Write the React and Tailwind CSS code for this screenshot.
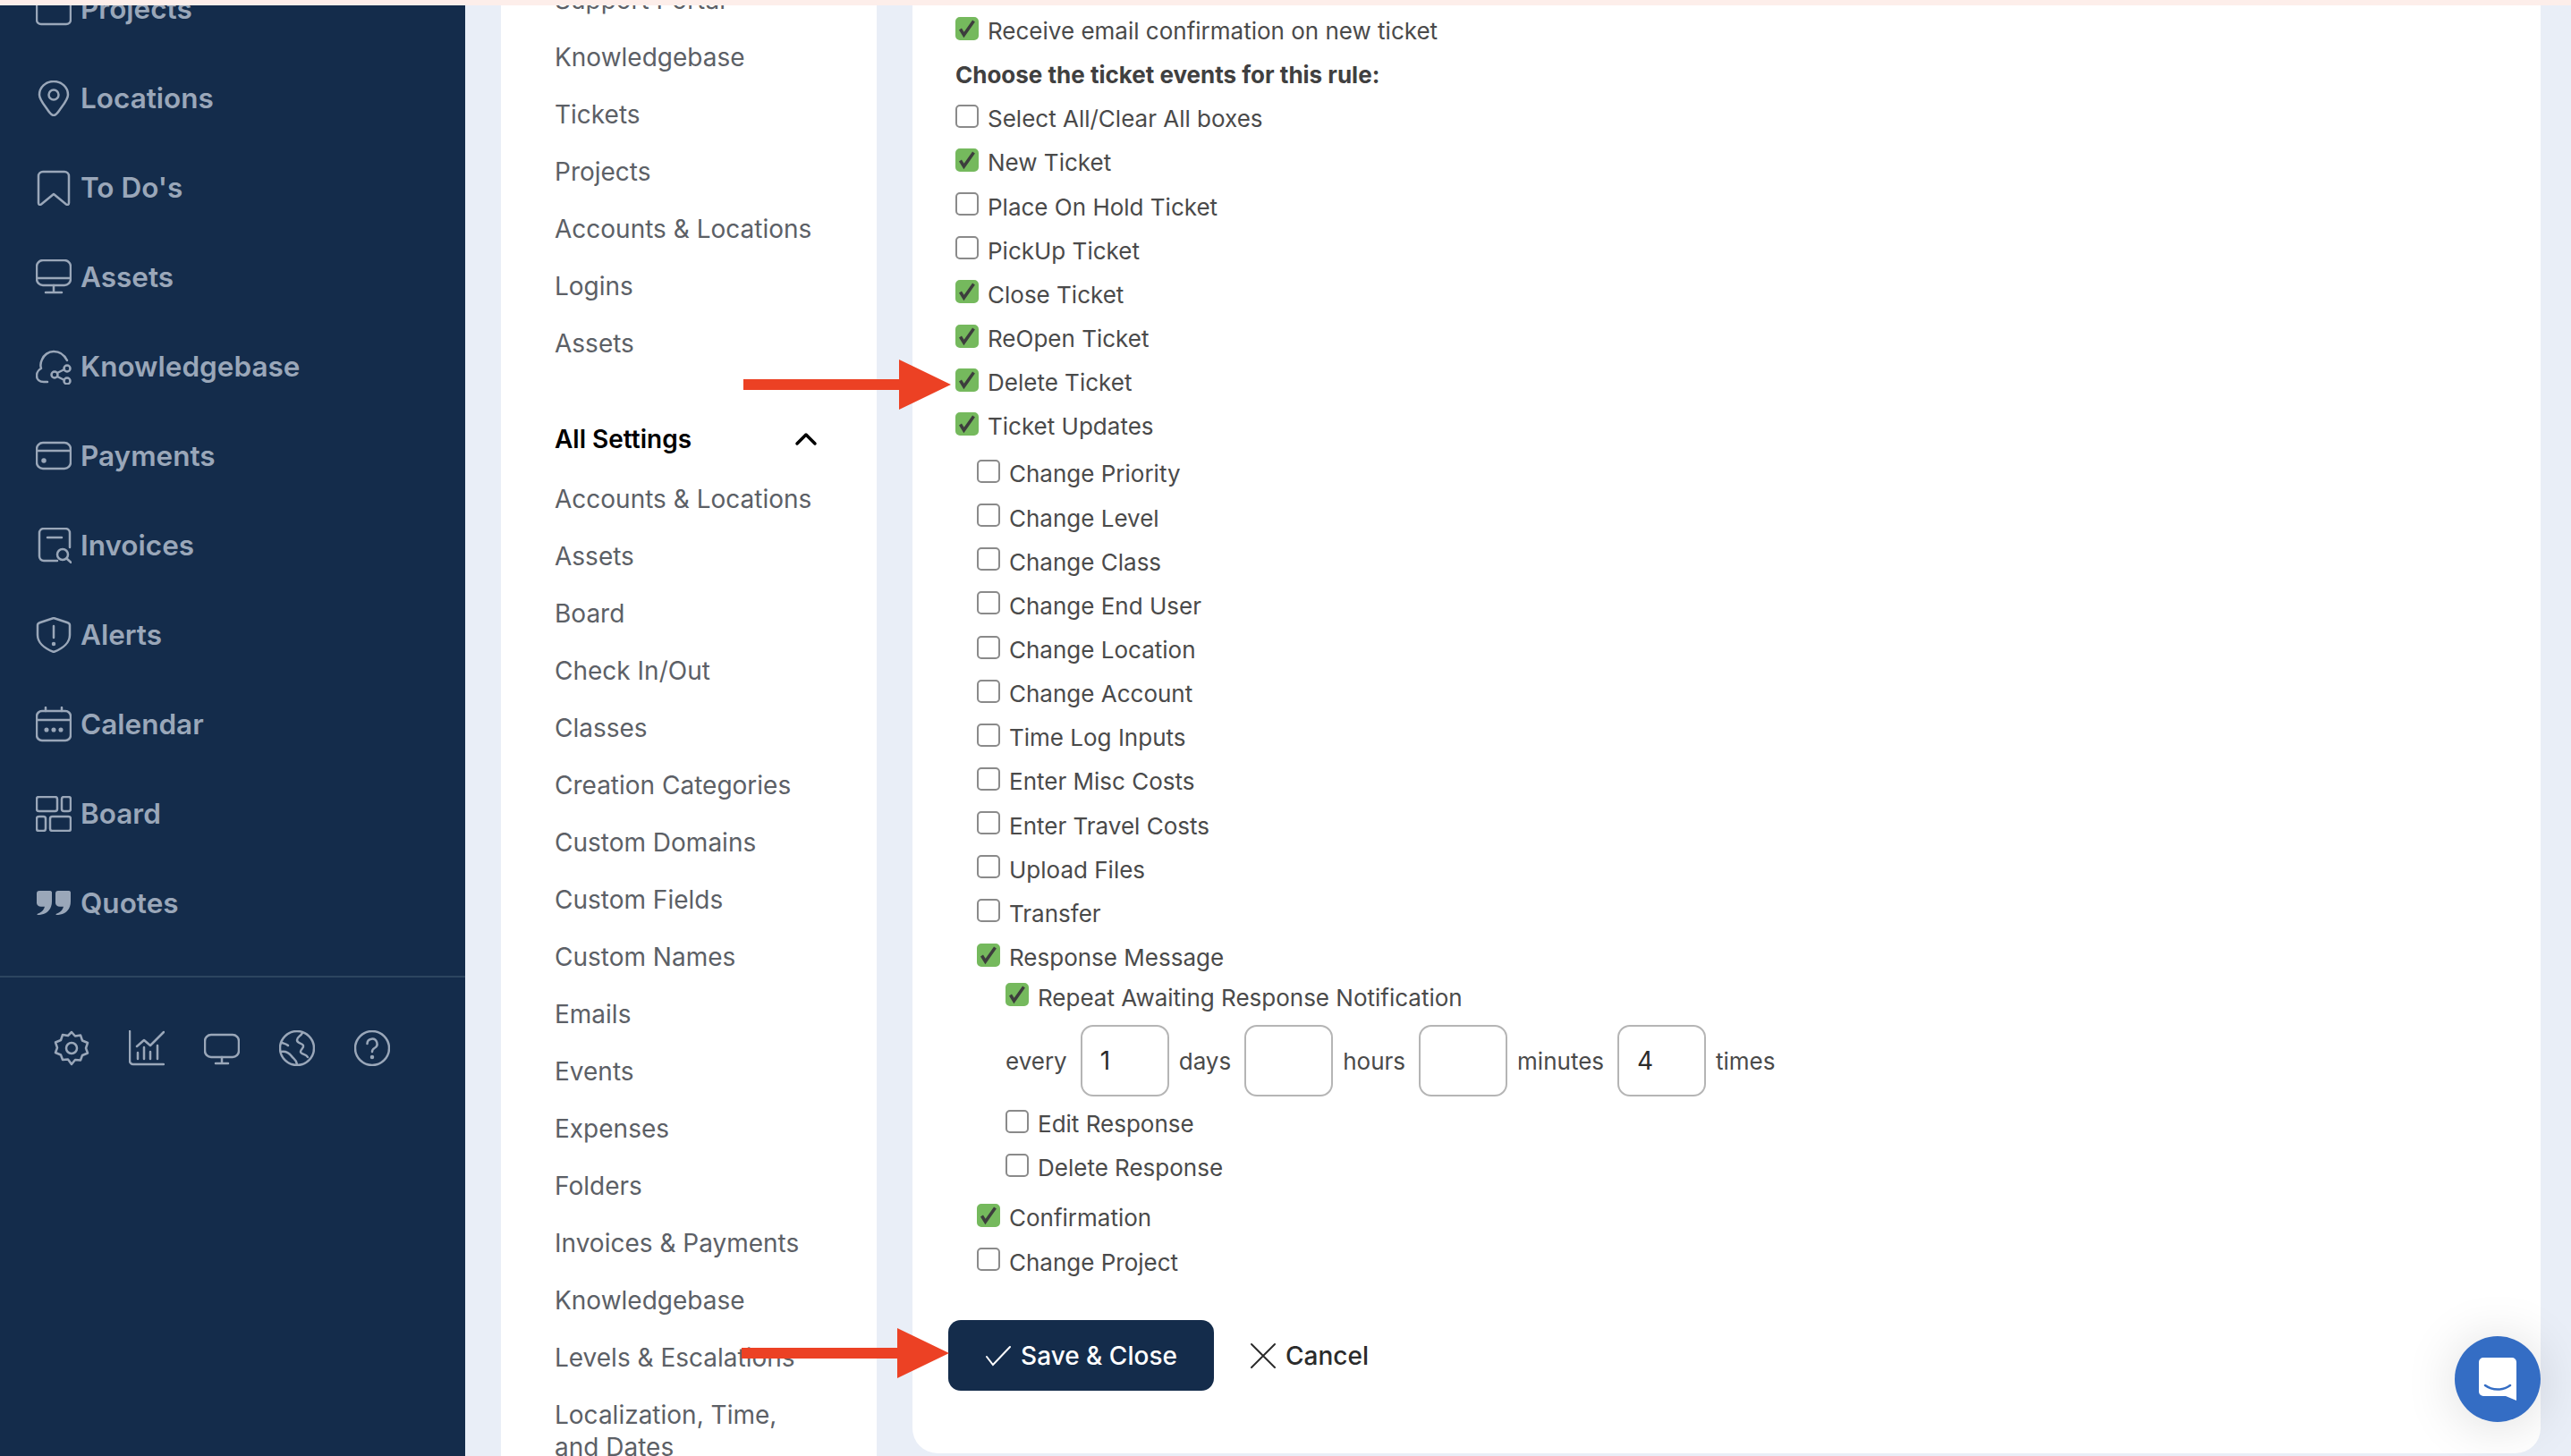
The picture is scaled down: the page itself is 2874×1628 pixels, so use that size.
const I = ({ children, w = 40, h = 40 }) => (
  <svg width={w} height={h} viewBox="0 0 40 40" fill="none" stroke="#9aa7b9" strokeWidth="2.5" strokeLinecap="round" strokeLinejoin="round" className="shrink-0">
    {children}
  </svg>
);

const icons = {
  Projects: <rect x="1" y="1" width="38" height="36" rx="5" />,
  Locations: (
    <>
      <path d="M20 39c-2 0-4-2-7-6.500C9 27 4 21 4 16 4 7.500 11 1 20 1s16 6.500 16 15c0 5-5 11-9 16.500C24 37 22 39 20 39z" />
      <circle cx="20" cy="16" r="5.500" />
    </>
  ),
  "To Do's": <path d="M3 7a5 5 0 0 1 5-5h24a5 5 0 0 1 5 5v30c0 2-1.500 2.500-3 1.500L20 27 6 38.500C4.500 39.500 3 39 3 37z" />,
  Assets: (
    <>
      <rect x="1" y="1" width="38" height="28" rx="7" />
      <path d="M1 21h38M20 29v7M11 37h18" />
    </>
  ),
  Knowledgebase: (
    <>
      <path d="M13 37H9c-5 0-8-3-8-7 0-4 3-7 5-8-1-3-1-6 1-10 2-5 7-9 13-9 7 0 12 4 15 10" />
      <circle cx="35" cy="22" r="3.500" />
      <circle cx="35" cy="36" r="3.500" />
      <circle cx="21" cy="29" r="3.500" />
      <path d="M24 27l8-4M24 31l8 4" />
    </>
  ),
  Payments: (
    <>
      <rect x="1" y="5" width="38" height="29" rx="7" />
      <path d="M1 14h38" />
      <circle cx="9" cy="25" r="1.500" fill="#9aa7b9" />
    </>
  ),
  Invoices: (
    <>
      <path d="M24 37H9a5 5 0 0 1-5-5V6a5 5 0 0 1 5-5h24a5 5 0 0 1 5 5v16" />
      <path d="M13 11h16" />
      <circle cx="30" cy="30" r="6" />
      <path d="M34.500 34.500l5 4.500" />
    </>
  ),
  Alerts: (
    <>
      <path d="M20 1l15 5c2 .7 3 1.500 3 3v11c0 8-7 15-18 19C9 35 2 28 2 20V9c0-1.500 1-2.300 3-3z" />
      <path d="M20 10v13" />
      <circle cx="20" cy="30" r="1" fill="#9aa7b9" />
    </>
  ),
  Calendar: (
    <>
      <rect x="1" y="5" width="38" height="33" rx="6" />
      <path d="M1 15h38M11 1v4M29 1v4" />
      <circle cx="12" cy="26" r="1.300" fill="#9aa7b9" />
      <circle cx="20" cy="26" r="1.300" fill="#9aa7b9" />
      <circle cx="28" cy="26" r="1.300" fill="#9aa7b9" />
    </>
  ),
  Board: (
    <>
      <rect x="1" y="1" width="23" height="16" rx="2.500" />
      <rect x="29" y="1" width="10" height="16" rx="2.500" />
      <rect x="1" y="23" width="10" height="16" rx="2.500" />
      <rect x="16" y="23" width="23" height="16" rx="2.500" />
    </>
  ),
  Quotes: (
    <g fill="#9aa7b9" stroke="none">
      <path d="M1 9c0-2 1-3 3-3h12c1.500 0 2 1 2 2v10c0 9-6 15-16 15 -.5 0-.7-1 0-1.300 4-1 7-4 8-8H6c-3 0-5-2-5-4z" />
      <path d="M22 9c0-2 1-3 3-3h12c1.500 0 2 1 2 2v10c0 9-6 15-16 15 -.5 0-.7-1 0-1.300 4-1 7-4 8-8H27c-3 0-5-2-5-4z" />
    </g>
  ),
};

const bottomIcons = [
  <>
    <path d="M20 2l4 4.500 6-1 2 6 6 2.500-2 6 2 5.500-6 2.500-2 5.500-6-.5L20 38l-4-5.500-6 .5-2-5.500-6-2.500 2-5.500-2-6 6-2.500 2-6 6 1z" />
    <circle cx="20" cy="20" r="6" />
  </>,
  <>
    <path d="M1 1v33a4 4 0 0 0 4 4h34" />
    <path d="M9 18l8-7 7 6 15-15" />
    <path d="M10 32v-7M17 32V19M24 32v-8M32 32V17" />
  </>,
  <>
    <rect x="1" y="5" width="38" height="25" rx="7" />
    <path d="M20 30v6M13 37h14" />
  </>,
  <>
    <circle cx="20" cy="20" r="19" />
    <path d="M2 24c6-1 9 1 12 5 2 3 5 3 6 9M26 3c-2 4-6 4-6 8 0 4 6 3 7 6s-3 4-3 7 6 2 8 6M3 14c3 1 5 1 7 3" />
  </>,
  <>
    <circle cx="20" cy="20" r="19" />
    <path d="M14.500 15a5.500 5.500 0 1 1 8 5c-1.700 1-2.500 2-2.500 4" />
    <circle cx="20" cy="30" r="1" fill="#9aa7b9" />
  </>,
];

const sideItems = ["Projects", "Locations", "To Do's", "Assets", "Knowledgebase", "Payments", "Invoices", "Alerts", "Calendar", "Board", "Quotes"];
const topLinks = ["Support Portal", "Knowledgebase", "Tickets", "Projects", "Accounts & Locations", "Logins", "Assets"];
const settingsLinks = ["Accounts & Locations", "Assets", "Board", "Check In/Out", "Classes", "Creation Categories", "Custom Domains", "Custom Fields", "Custom Names", "Emails", "Events", "Expenses", "Folders", "Invoices & Payments", "Knowledgebase", "Levels & Escalations"];

const Check = ({ label, on, h = "h-[49.150px]" }) => (
  <label className={`flex items-center gap-[10px] ${h}`}>
    <span className={`mb-[6px] flex h-[26px] w-[26px] shrink-0 items-center justify-center rounded-[5px] border-2 ${on ? "border-[#75b95d] bg-[#75b95d]" : "border-[#8a8a8a] bg-white"}`}>
      {on && (
        <svg width="22" height="22" viewBox="0 0 22 22" fill="none" stroke="#3d3d3d" strokeWidth="3.500" strokeLinejoin="miter">
          <path d="M3.500 11.500l4 6.500L18.500 2.500" />
        </svg>
      )}
    </span>
    <span>{label}</span>
  </label>
);

const Box = ({ v }) => (
  <span className="ml-[15px] mr-[11px] flex h-[80px] w-[99px] shrink-0 items-center rounded-[14px] border-2 border-[#b5b5b5] bg-white pl-[20px] text-[28px] text-[#2b2b2b]">{v}</span>
);

export default function App() {
  return (
    <div className="relative flex h-[1628px] w-[2874px] flex-col overflow-hidden bg-[#e9eef7] font-['Inter',sans-serif]">
      <div className="h-[6px] shrink-0 bg-[#fdeeea]" />
      <div className="flex min-h-0 flex-1 overflow-hidden">
        <aside className="flex w-[520px] shrink-0 flex-col bg-[#142c4b]">
          <div className="-mt-[46px] border-b-2 border-[#2c4560] pb-[31px] pl-[40px]">
            {sideItems.map((n) => (
              <div key={n} className="flex h-[100px] items-center gap-[10px] text-[31.500px] font-semibold text-[#9aa7b9]">
                <I>{icons[n]}</I>
                <span>{n}</span>
              </div>
            ))}
          </div>
          <div className="flex gap-[44px] pl-[60px] pt-[59px]">
            {bottomIcons.map((c, i) => (
              <I key={i}>{c}</I>
            ))}
          </div>
        </aside>

        <nav className="ml-[40px] flex w-[420px] shrink-0 flex-col bg-white pl-[60px] text-[28px] text-[#5c6066]">
          <div className="-mt-[38px]">
            {topLinks.map((n) => (
              <div key={n} className="flex h-[64px] items-center">{n}</div>
            ))}
          </div>
          <div className="mt-[54px] flex h-[64px] items-center justify-between pr-[66px] font-semibold text-black">
            <span>All Settings</span>
            <svg width="26" height="16" viewBox="0 0 26 16" fill="none" stroke="#000" strokeWidth="3.500" strokeLinecap="round" strokeLinejoin="round">
              <path d="M3 13L13 3l10 10" />
            </svg>
          </div>
          <div className="mt-[14px]">
            {settingsLinks.map((n) => (
              <div key={n} className="flex h-[64px] items-center">{n}</div>
            ))}
            <div className="pt-[14px] leading-[36px]">Localization, Time,<br />and Dates</div>
          </div>
        </nav>

        <main className="mb-[3px] ml-[40px] mr-[34px] flex min-w-0 flex-1 flex-col rounded-b-[28px] bg-white pl-[48px] pt-[4px] text-[26px] text-[#4a4a4a]">
          <Check on label="Receive email confirmation on new ticket" />
          <div className="flex h-[49.150px] items-center font-bold text-[#404040]">Choose the ticket events for this rule:</div>
          <Check label="Select All/Clear All boxes" />
          <Check on label="New Ticket" />
          <Check label="Place On Hold Ticket" />
          <Check label="PickUp Ticket" />
          <Check on label="Close Ticket" />
          <Check on label="ReOpen Ticket" />
          <Check on label="Delete Ticket" />
          <Check on label="Ticket Updates" />
          <div className="mt-[4px] pl-[24px]">
            {["Change Priority", "Change Level", "Change Class", "Change End User", "Change Location", "Change Account", "Time Log Inputs", "Enter Misc Costs", "Enter Travel Costs", "Upload Files", "Transfer"].map((n) => (
              <Check key={n} label={n} />
            ))}
            <Check on label="Response Message" />
            <div className="pl-[32px]">
              <Check on label="Repeat Awaiting Response Notification" h="h-[40px]" />
              <div className="mt-[11px] flex h-[80px] items-center">
                <span>every</span>
                <Box v="1" />
                <span>days</span>
                <Box />
                <span>hours</span>
                <Box />
                <span>minutes</span>
                <Box v="4" />
                <span>times</span>
              </div>
              <div className="mt-[6px]">
                <Check label="Edit Response" />
                <Check label="Delete Response" />
              </div>
            </div>
            <div className="mt-[7px]">
              <Check on label="Confirmation" />
              <Check label="Change Project" />
            </div>
          </div>
          <div className="-ml-[8px] mt-[40px] flex items-center">
            <button className="flex h-[79px] w-[297px] items-center justify-center gap-[10px] rounded-[14px] bg-[#142c4b] pt-[1px] text-[28px] font-medium text-white">
              <svg width="30" height="24" viewBox="0 0 30 24" fill="none" stroke="#fff" strokeWidth="2" strokeLinecap="round">
                <path d="M2 13l7 9L28 2" />
              </svg>
              Save &amp; Close
            </button>
            <button className="ml-[40px] flex items-center gap-[10px] pt-[1px] text-[28px] font-medium text-[#2b2b2b]">
              <svg width="30" height="30" viewBox="0 0 30 30" fill="none" stroke="#2b2b2b" strokeWidth="2" strokeLinecap="round">
                <path d="M2 2l26 26M28 2L2 28" />
              </svg>
              Cancel
            </button>
          </div>
        </main>
      </div>

      <svg width="232" height="58" viewBox="0 0 232 58" className="absolute left-[831px] top-[401px]">
        <path d="M0 23h174V1l58 28-58 28V35H0z" fill="#ec4124" />
      </svg>
      <svg width="232" height="58" viewBox="0 0 232 58" className="absolute left-[829px] top-[1484px]">
        <path d="M0 23h174V1l58 28-58 28V35H0z" fill="#ec4124" />
      </svg>

      <div className="absolute left-[2744px] top-[1494px] flex h-[96px] w-[96px] items-center justify-center rounded-full bg-[#346dc4] shadow-[0_4px_60px_rgba(0,0,0,0.14)]">
        <svg width="42" height="48" viewBox="0 0 42 48">
          <path d="M5 0h32a5 5 0 0 1 5 5v43l-12-5H5a5 5 0 0 1-5-5V5a5 5 0 0 1 5-5z" fill="#fff" />
          <path d="M7 31c8 6 20 6 28 0" fill="none" stroke="#346dc4" strokeWidth="2.500" strokeLinecap="round" />
        </svg>
      </div>
    </div>
  );
}
